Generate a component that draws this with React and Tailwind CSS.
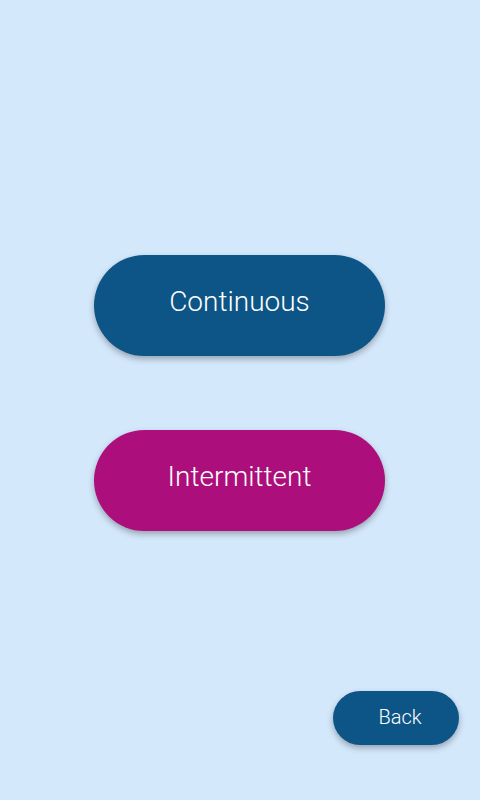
export default function App() {
    return (
        <div
            className="w-[480px] h-[800px] bg-[#d4e8fc] flex flex-col items-start"
            style={{ fontFamily: 'Roboto, "Liberation Sans", sans-serif' }}
        >
            <button className="ml-[94px] mt-[255px] w-[291px] h-[101px] pb-[7px] rounded-full bg-[#0c5586] text-white text-[28px] font-light shadow-[0_3px_6px_rgba(0,0,0,0.3)]">
                Continuous
            </button>
            <button className="ml-[94px] mt-[74px] w-[291px] h-[101px] pb-[7px] rounded-full bg-[#ac0f7b] text-white text-[28px] font-light shadow-[0_3px_6px_rgba(0,0,0,0.3)]">
                Intermittent
            </button>
            <div className="w-full flex justify-end pr-[21px] mt-[160px]">
                <button className="w-[126px] h-[54px] pl-[8px] pb-[3px] rounded-full bg-[#0c5586] text-white text-[20px] font-light shadow-[0_3px_6px_rgba(0,0,0,0.3)]">
                    Back
                </button>
            </div>
        </div>
    );
}
